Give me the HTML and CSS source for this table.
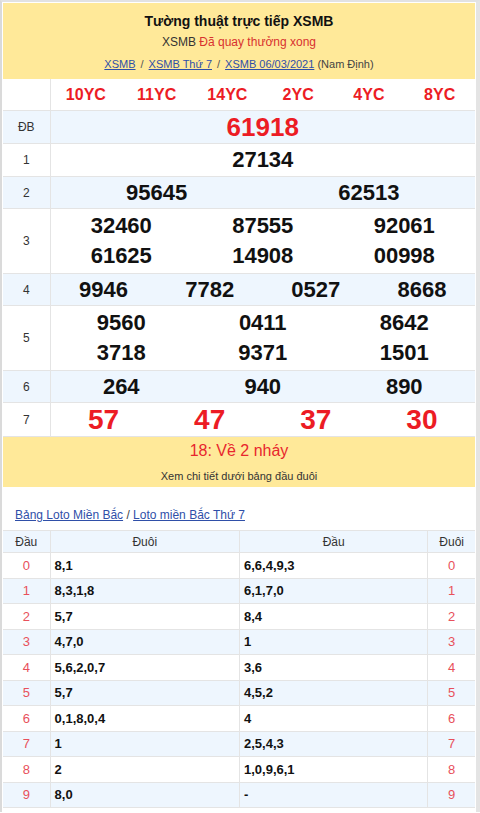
FILE: index.html
```html
<!DOCTYPE html>
<html lang="vi">
<head>
<meta charset="utf-8">
<title>XSMB</title>
<link rel="stylesheet" href="styles.css">
</head>
<body>
<div class="page">
  <div class="head">
    <div class="title">Tường thuật trực tiếp XSMB</div>
    <div class="status">XSMB <span class="done">Đã quay thưởng xong</span></div>
    <div class="crumbs"><a href="#">XSMB</a><span class="sep">/</span><a href="#">XSMB Thứ 7</a><span class="sep">/</span><a href="#">XSMB 06/03/2021</a> (Nam Định)</div>
  </div>
  <table class="res">
    <colgroup><col class="c-lbl"><col></colgroup>
    <tr class="codes">
      <td></td>
      <td><div class="g g6"><span>10YC</span><span>11YC</span><span>14YC</span><span>2YC</span><span>4YC</span><span>8YC</span></div></td>
    </tr>
    <tr class="alt tall">
      <td class="lbl">ĐB</td>
      <td><div class="g g1 db"><span>61918</span></div></td>
    </tr>
    <tr class="tall">
      <td class="lbl">1</td>
      <td><div class="g g1"><span>27134</span></div></td>
    </tr>
    <tr class="alt">
      <td class="lbl">2</td>
      <td><div class="g g2"><span>95645</span><span>62513</span></div></td>
    </tr>
    <tr class="two">
      <td class="lbl">3</td>
      <td><div class="g g3"><span>32460</span><span>87555</span><span>92061</span><span>61625</span><span>14908</span><span>00998</span></div></td>
    </tr>
    <tr class="alt">
      <td class="lbl">4</td>
      <td><div class="g g4"><span>9946</span><span>7782</span><span>0527</span><span>8668</span></div></td>
    </tr>
    <tr class="two">
      <td class="lbl">5</td>
      <td><div class="g g3"><span>9560</span><span>0411</span><span>8642</span><span>3718</span><span>9371</span><span>1501</span></div></td>
    </tr>
    <tr class="alt">
      <td class="lbl">6</td>
      <td><div class="g g3"><span>264</span><span>940</span><span>890</span></div></td>
    </tr>
    <tr class="last">
      <td class="lbl">7</td>
      <td><div class="g g4 g7"><span>57</span><span>47</span><span>37</span><span>30</span></div></td>
    </tr>
  </table>
  <div class="note">
    <div class="hot">18: Về 2 nháy</div>
    <div class="hint">Xem chi tiết dưới bảng đầu đuôi</div>
  </div>
  <div class="loto-links"><a href="#">Bảng Loto Miền Bắc</a> / <a href="#">Loto miền Bắc Thứ 7</a></div>
  <table class="loto">
    <colgroup><col class="lc1"><col class="lc2"><col class="lc3"><col class="lc4"></colgroup>
    <tr class="lh"><td>Đầu</td><td>Đuôi</td><td>Đầu</td><td>Đuôi</td></tr>
    <tr><td class="k">0</td><td class="v">8,1</td><td class="v">6,6,4,9,3</td><td class="k">0</td></tr>
    <tr class="alt"><td class="k">1</td><td class="v">8,3,1,8</td><td class="v">6,1,7,0</td><td class="k">1</td></tr>
    <tr><td class="k">2</td><td class="v">5,7</td><td class="v">8,4</td><td class="k">2</td></tr>
    <tr class="alt"><td class="k">3</td><td class="v">4,7,0</td><td class="v">1</td><td class="k">3</td></tr>
    <tr><td class="k">4</td><td class="v">5,6,2,0,7</td><td class="v">3,6</td><td class="k">4</td></tr>
    <tr class="alt"><td class="k">5</td><td class="v">5,7</td><td class="v">4,5,2</td><td class="k">5</td></tr>
    <tr><td class="k">6</td><td class="v">0,1,8,0,4</td><td class="v">4</td><td class="k">6</td></tr>
    <tr class="alt"><td class="k">7</td><td class="v">1</td><td class="v">2,5,4,3</td><td class="k">7</td></tr>
    <tr><td class="k">8</td><td class="v">2</td><td class="v">1,0,9,6,1</td><td class="k">8</td></tr>
    <tr class="alt"><td class="k">9</td><td class="v">8,0</td><td class="v">-</td><td class="k">9</td></tr>
  </table>
</div>
</body>
</html>
```

FILE: styles.css
```css
html, body {
  margin: 0;
  padding: 0;
  background: #fff;
}
body {
  font-family: "Liberation Sans", Arial, sans-serif;
  color: #222;
}
.page {
  width: 472px;
  height: 808px;
  overflow: hidden;
  border-left: 2px solid #dadada;
  border-top: 2px solid #e2e2e2;
  border-right: 4px solid #e4e4e4;
  padding: 1px;
}
.head {
  background: #ffe999;
  text-align: center;
  padding: 7px 0 5px;
}
.title {
  font-size: 14px;
  font-weight: bold;
  line-height: 22px;
  color: #111;
}
.status {
  font-size: 12px;
  line-height: 20px;
  color: #333;
}
.done { color: #d8312f; }
.crumbs {
  font-size: 11px;
  line-height: 20px;
  margin-top: 2px;
  color: #444;
}
.crumbs a, .loto-links a {
  color: #2f4fa8;
  text-decoration: underline;
}
.sep { margin: 0 5px; color: #555; }

.res {
  width: 100%;
  border-collapse: collapse;
  table-layout: fixed;
}
.res td {
  border: 1px solid #e4e4e4;
  padding: 0;
  height: 31px;
}
.res tr:first-child td { border-top: 0; }
.res td:first-child { border-left: 0; }
.res td:last-child { border-right: 0; }
.c-lbl { width: 47px; }
.res tr.tall td { height: 32px; }
.res tr.two td { height: 64px; }
.res tr.last td { height: 33px; }
.res tr.alt td { background: #eef6fe; }
.lbl {
  text-align: center;
  font-size: 12px;
  color: #333;
}
.g {
  display: grid;
  text-align: center;
  font-weight: bold;
  font-size: 22px;
  line-height: 30px;
  color: #111;
}
.g1 { grid-template-columns: 1fr; }
.g2 { grid-template-columns: repeat(2, 1fr); }
.g3 { grid-template-columns: repeat(3, 1fr); }
.g4 { grid-template-columns: repeat(4, 1fr); }
.g6 { grid-template-columns: repeat(6, 1fr); font-size: 16px; color: #ec1c24; }
.db { color: #ec1c24; font-size: 26px; }
.g7 { color: #ec1c24; font-size: 28px; }

.note {
  background: #ffe999;
  text-align: center;
  padding: 3px 0 1px;
}
.hot {
  color: #e8262d;
  font-size: 16px;
  line-height: 22px;
  margin-bottom: 4px;
}
.hint {
  font-size: 11px;
  line-height: 20px;
  color: #333;
}
.loto-links {
  font-size: 12px;
  line-height: 18px;
  padding-left: 12px;
  margin: 19px 0 6px;
  color: #444;
}
.loto {
  width: 100%;
  border-collapse: collapse;
  table-layout: fixed;
  font-size: 12px;
}
.loto td {
  border: 1px solid #e4e4e4;
  height: 24.5px;
  padding: 0 4px;
}
.loto td:first-child { border-left: 0; }
.loto td:last-child { border-right: 0; }
.lc1 { width: 47px; }
.lc2 { width: 189px; }
.lc3 { width: 188px; }
.lc4 { width: 47px; }
.loto .lh td {
  background: #eef6fe;
  text-align: center;
  color: #333;
  height: 21px;
}
.loto tr.alt td { background: #eef6fe; }
.loto .k {
  text-align: center;
  color: #e8505b;
  font-size: 13px;
}
.loto .v {
  font-weight: bold;
  color: #111;
  font-size: 13px;
}
```
